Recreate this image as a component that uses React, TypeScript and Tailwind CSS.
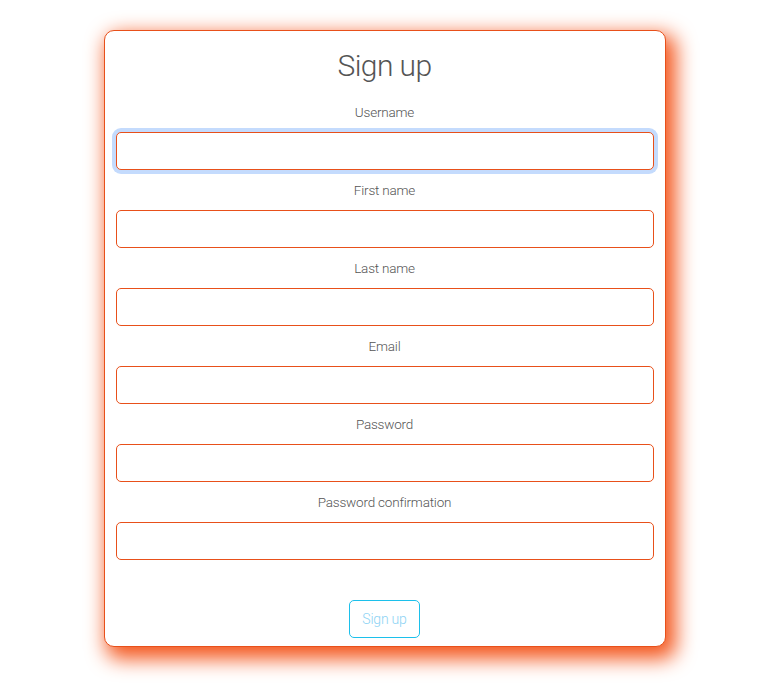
export default function App() {
  const fields = [
    "Username",
    "First name",
    "Last name",
    "Email",
    "Password",
    "Password confirmation",
  ];

  return (
    <div className="min-h-screen bg-white pt-[30px] pb-10 font-['Roboto',sans-serif]">
      <form className="mx-auto w-[562px] rounded-[10px] border border-[#e8501a] bg-white px-[11px] pt-[15px] pb-[8px] shadow-[6px_8px_20px_4px_#f4581f]">
        <h2 className="text-center text-[30px] leading-[40px] font-light tracking-[-0.6px] text-[#555]">Sign up</h2>
        <div className="mt-[16px] flex flex-col gap-[10px]">
          {fields.map((f, i) => (
            <div key={f} className="flex flex-col gap-[10px]">
              <label className="text-center text-[13.5px] leading-[20px] font-light tracking-[-0.2px] text-[#555]">{f}</label>
              <input
                type={f.startsWith("Password") ? "password" : "text"}
                className={
                  "h-[38px] w-full rounded-[5px] border border-[#e8501a] bg-white px-3 outline-none" +
                  (i === 0 ? " shadow-[0_0_0_4px_#c4dbfd]" : "")
                }
              />
            </div>
          ))}
        </div>
        <div className="mt-10 flex justify-center">
          <button
            type="submit"
            className="h-[38px] w-[71px] rounded-[5px] border border-[#1cc0eb] bg-white text-[14px] font-light tracking-[-0.2px] text-[#8dd3f4]"
          >
            Sign up
          </button>
        </div>
      </form>
    </div>
  );
}
